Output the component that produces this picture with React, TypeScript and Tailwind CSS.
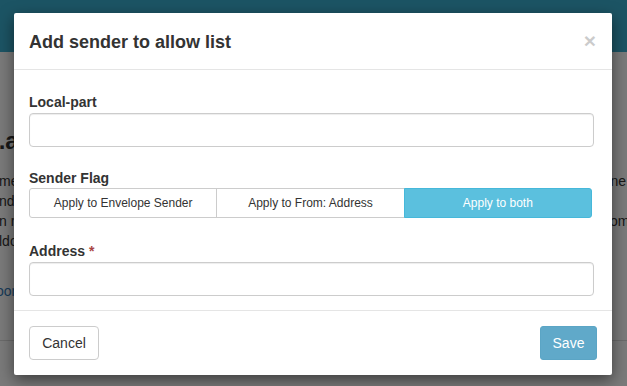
import React from 'react';

const font = { fontFamily: '"Liberation Sans", Arial, sans-serif' };

function BackgroundPage() {
  return (
    <div className="absolute inset-0 bg-white">
      {/* top bar */}
      <div className="h-[52px] bg-[#3cafd1]" />
      <div className="pt-[74px] text-[24px] font-bold text-[#333] leading-[30px]">
        <span className="-ml-[8px]">i.a</span>
      </div>
      <div className="mt-[15px] flex flex-col text-[14px] text-[#333] leading-[20px]">
        <div className="flex justify-between">
          <span className="-ml-[1px]">mes</span>
          <span className="mr-[-10px]">ne s</span>
        </div>
        <div className="flex justify-between">
          <span className="-ml-[1px]">nde</span>
          <span />
        </div>
        <div className="flex justify-between">
          <span className="-ml-[1px]">n r</span>
          <span className="mr-[-14px]">om a</span>
        </div>
        <div className="flex justify-between">
          <span className="-ml-[1px]">ldc</span>
          <span />
        </div>
      </div>
      <div className="mt-[30px] text-[14px] text-[#337ab7] leading-[20px]">
        <span className="-ml-[4px] inline-block">oon</span>
      </div>
      <div className="mt-[39px] border-t border-[#ddd]" />
    </div>
  );
}

function Field({ label, required }: { label: string; required?: boolean }) {
  return (
    <div className="flex flex-col">
      <label className="text-[14px] font-bold text-[#333] leading-[20px] mb-[1px]">
        {label}
        {required && <span className="text-[#a94442] ml-[4px]">*</span>}
      </label>
      <input
        type="text"
        className="h-[34px] w-full rounded-[4px] border border-[#ccc] bg-white px-[12px] text-[14px] shadow-[inset_0_1px_1px_rgba(0,0,0,0.075)] outline-none"
      />
    </div>
  );
}

export default function App() {
  const flags = ['Apply to Envelope Sender', 'Apply to From: Address', 'Apply to both'];
  const active = 2;

  return (
    <div className="relative h-[386px] w-[627px] overflow-hidden" style={font}>
      <BackgroundPage />
      <div className="absolute inset-0 bg-black/[0.52]" />

      {/* modal */}
      <div className="absolute left-[14px] top-[13px] w-[598px] rounded-[2px] bg-white shadow-[0_5px_15px_rgba(0,0,0,0.5)]">
        <div className="flex h-[57px] items-center justify-between border-b border-[#e5e5e5] pl-[15px] pr-[16px]">
          <h4 className="text-[18px] font-bold text-[#333] leading-[20px] mt-[2px]">
            Add sender to allow list
          </h4>
          <button className="text-[21px] font-bold leading-none text-black opacity-20 -mt-[1px]">×</button>
        </div>

        <div className="pl-[15px] pr-[18px] pt-[22px] pb-[14px]">
          <Field label="Local-part" />

          <div className="mt-[21px] flex flex-col">
            <label className="text-[14px] font-bold text-[#333] leading-[20px]">Sender Flag</label>
            <div className="flex w-[563px]">
              {flags.map((f, i) => (
                <button
                  key={f}
                  className={`h-[30px] flex-1 border text-[12px] leading-[18px] ${
                    i === active
                      ? 'border-[#46b8da] bg-[#5bc0de] text-white'
                      : 'border-[#ccc] bg-white text-[#333]'
                  } ${i === 0 ? 'rounded-l-[3px]' : '-ml-px'} ${i === flags.length - 1 ? 'rounded-r-[3px]' : ''}`}
                >
                  {f}
                </button>
              ))}
            </div>
          </div>

          <div className="mt-[23px]">
            <Field label="Address" required />
          </div>
        </div>

        <div className="flex items-center justify-between border-t border-[#e5e5e5] px-[15px] py-[15px]">
          <button className="h-[34px] w-[70px] rounded-[4px] border border-[#ccc] bg-white text-[14px] text-[#333]">
            Cancel
          </button>
          <button className="h-[34px] w-[57px] rounded-[3px] border border-[#5ba5c5] bg-[#60a9c9] text-[14px] text-white">
            Save
          </button>
        </div>
      </div>
    </div>
  );
}
